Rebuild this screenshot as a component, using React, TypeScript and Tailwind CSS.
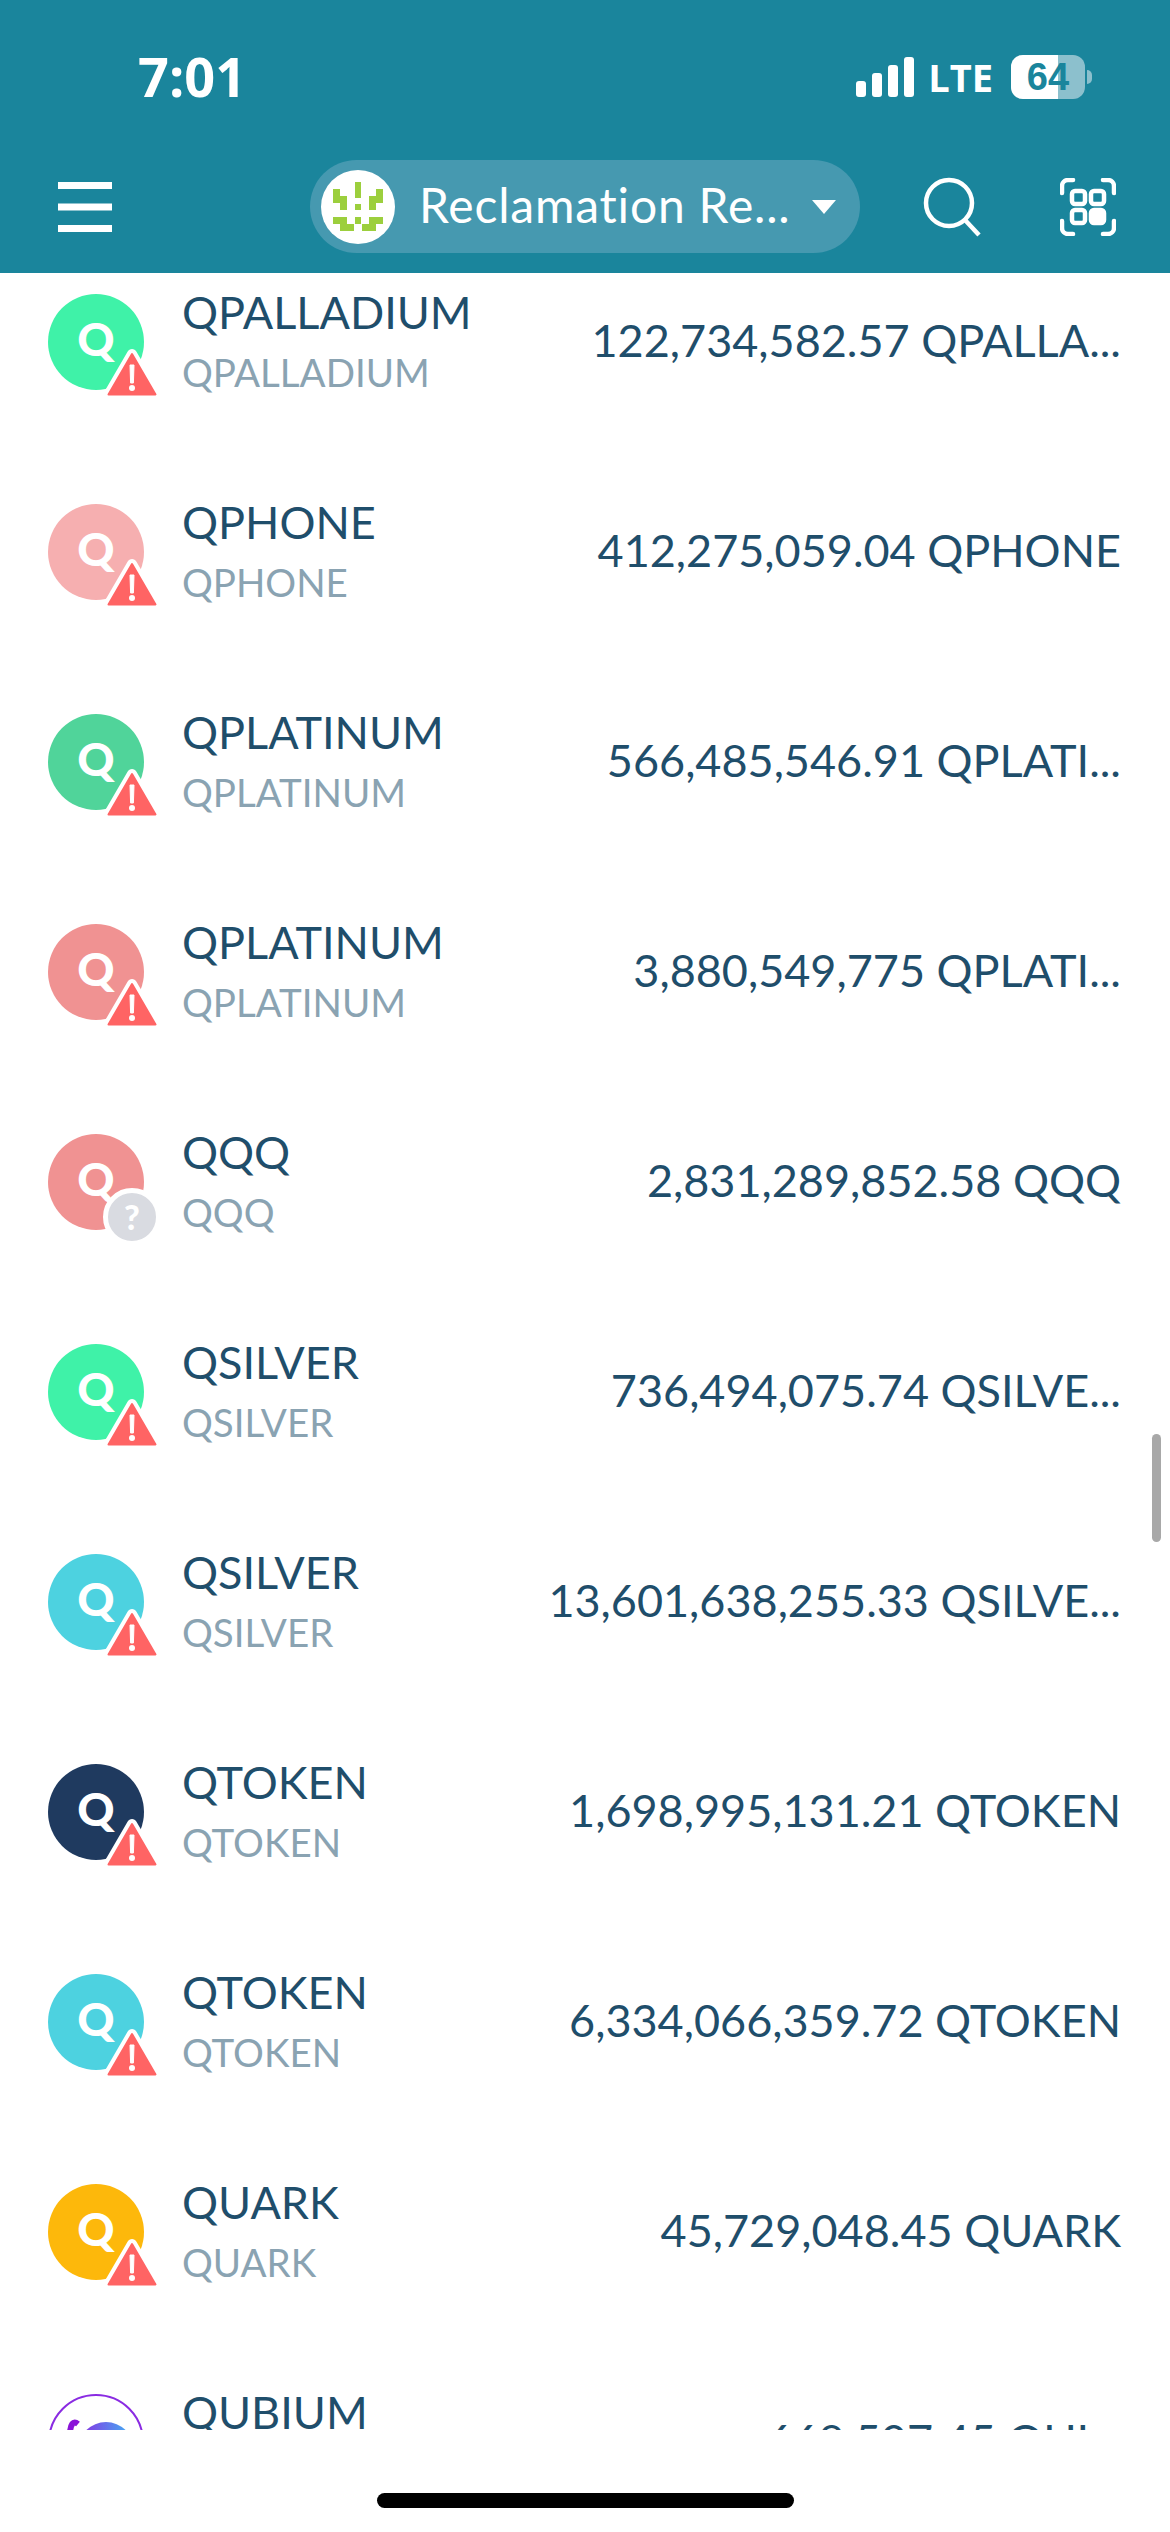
import React from "react";

const TOKENS = [
  { name: "QPALLADIUM", amount: "122,734,582.57 QPALLA...", color: "bg-[#3ff2a8]" },
  { name: "QPHONE", amount: "412,275,059.04 QPHONE", color: "bg-[#f6afb0]" },
  { name: "QPLATINUM", amount: "566,485,546.91 QPLATI...", color: "bg-[#50d49a]" },
  { name: "QPLATINUM", amount: "3,880,549,775 QPLATI...", color: "bg-[#f09292]" },
  { name: "QQQ", amount: "2,831,289,852.58 QQQ", color: "bg-[#f09292]", unknown: true },
  { name: "QSILVER", amount: "736,494,075.74 QSILVE...", color: "bg-[#3ff2a8]" },
  { name: "QSILVER", amount: "13,601,638,255.33 QSILVE...", color: "bg-[#4dd2e0]" },
  { name: "QTOKEN", amount: "1,698,995,131.21 QTOKEN", color: "bg-[#1f3a5f]" },
  { name: "QTOKEN", amount: "6,334,066,359.72 QTOKEN", color: "bg-[#4dd2e0]" },
  { name: "QUARK", amount: "45,729,048.45 QUARK", color: "bg-[#fdb80b]" },
];

const WarningBadge = () => (
  <svg className="absolute left-[54px] top-[52px]" width="60" height="56" viewBox="0 0 60 56">
    <path d="M30 8 L53.5 48.5 H6.5 Z" fill="#ff6464" stroke="#fff" strokeWidth="10" strokeLinejoin="round" />
    <path d="M30 8 L53.5 48.5 H6.5 Z" fill="#ff6464" stroke="#ff6464" strokeWidth="2" strokeLinejoin="round" />
    <path d="M28 19 h4 l-0.6 18 h-2.8 Z" fill="#fff" stroke="#fff" strokeWidth="1" strokeLinejoin="round" />
    <circle cx="30" cy="42" r="3" fill="#fff" />
  </svg>
);

const UnknownBadge = () => (
  <div className="absolute left-[55px] top-[54px] flex h-[58px] w-[58px] items-center justify-center rounded-full border-[5px] border-white bg-[#d9dbe1] text-[34px] font-black leading-none text-white">
    ?
  </div>
);

const Row = ({ name, amount, color, unknown }: any) => (
  <div className="flex h-[210px] items-center pl-[48px] pr-[49px]">
    <div className={`relative flex h-[96px] w-[96px] shrink-0 items-center justify-center rounded-full ${color}`}>
      <span className="-mt-[6px] text-[46px] font-black leading-none text-white">Q</span>
      {unknown ? <UnknownBadge /> : <WarningBadge />}
    </div>
    <div className="ml-[38px] flex flex-col">
      <span className="text-[45px] leading-[60px] text-[#1f4e6b]">{name}</span>
      <span className="text-[38.5px] leading-[60px] text-[#8aa3b2]">{name}</span>
    </div>
    <span className="-mt-[3px] ml-auto whitespace-nowrap text-[45px] text-[#1f4e6b]">{amount}</span>
  </div>
);

export default function App() {
  return (
    <div className="relative h-[2532px] w-[1170px] overflow-hidden bg-white font-['Lato',sans-serif]">
      {/* HEADER */}
      <div className="h-[273px] bg-[#1a859c]">
        <div className="flex h-[160px] items-start justify-between pl-[138px] pr-[78px] pt-[43px]">
          <span className="font-['Open_Sans',sans-serif] text-[54px] font-bold leading-[66px] text-white">7:01</span>
          <div className="flex items-center gap-[14px] pt-[12px]">
            <svg width="58" height="40" viewBox="0 0 58 40" fill="#fff">
              <rect x="0" y="24" width="10" height="16" rx="3" />
              <rect x="16" y="16" width="10" height="24" rx="3" />
              <rect x="32" y="8" width="10" height="32" rx="3" />
              <rect x="48" y="0" width="10" height="40" rx="3" />
            </svg>
            <span className="font-['Open_Sans',sans-serif] text-[38px] font-bold leading-none text-white">LTE</span>
            <div className="relative ml-[4px] flex h-[44px] w-[74px] items-center justify-center overflow-hidden rounded-[12px] bg-[#8cc0cd]">
              <div className="absolute inset-y-0 left-0 w-[47px] bg-white" />
              <span className="relative font-['Liberation_Sans',sans-serif] text-[38px] font-bold leading-none text-[#1a859c]">
                64
              </span>
            </div>
            <div className="-ml-[12px] h-[14px] w-[5px] rounded-r-full bg-[#8cc0cd]" />
          </div>
        </div>
        <div className="flex items-center pl-[58px]">
          <svg width="54" height="54" viewBox="0 0 54 54" fill="#fff">
            <rect x="0" y="2" width="54" height="7" />
            <rect x="0" y="23.5" width="54" height="7" />
            <rect x="0" y="45" width="54" height="7" />
          </svg>
          <div className="ml-[198px] flex h-[93px] w-[550px] items-center rounded-full bg-[#4699b0] pl-[11px]">
            <div className="flex h-[74px] w-[74px] items-center justify-center rounded-full bg-white">
              <svg width="50" height="50" viewBox="0 0 50 50" fill="#9ccf3d">
                <path d="M0 7 h7 v7 h7 v14 h-7 v-7 h-7 Z" />
                <path d="M50 7 h-7 v7 h-7 v14 h7 v-7 h7 Z" />
                <rect x="22" y="0" width="6" height="16" />
                <rect x="22" y="22" width="6" height="6" />
                <path d="M0 35 h14 v7 h8 v-7 h6 v7 h8 v-7 h14 v7 h-7 v7 h-14 v-7 h-8 v7 h-14 v-7 h-7 Z" />
              </svg>
            </div>
            <span className="-mt-[4px] ml-[24px] whitespace-nowrap text-[48px] leading-none tracking-[0.8px] text-white">
              Reclamation Re...
            </span>
            <svg className="ml-auto mr-[24px]" width="24" height="14" viewBox="0 0 24 14" fill="#fff">
              <path d="M0 0 H24 L12 14 Z" />
            </svg>
          </div>
          <svg className="ml-[63px]" width="58" height="60" viewBox="0 0 58 60" fill="none" stroke="#fff" strokeWidth="4.5">
            <circle cx="26" cy="26" r="23" />
            <path d="M42 43 L56 58" />
          </svg>
          <svg className="ml-[79px]" width="56" height="58" viewBox="0 0 56 58" fill="none" stroke="#fff" strokeWidth="4.5">
            <path d="M2 15 V8 a6 6 0 0 1 6 -6 H13" strokeLinecap="round" />
            <path d="M43 2 H48 a6 6 0 0 1 6 6 V15" strokeLinecap="round" />
            <path d="M2 43 V50 a6 6 0 0 0 6 6 H13" strokeLinecap="round" />
            <path d="M43 56 H48 a6 6 0 0 0 6 -6 V43" strokeLinecap="round" />
            <rect x="12" y="13" width="13" height="13" rx="3" />
            <rect x="31" y="13" width="13" height="13" rx="3" />
            <rect x="12" y="32" width="13" height="13" rx="3" />
            <rect x="31" y="32" width="13" height="13" rx="3" fill="#fff" />
          </svg>
        </div>
      </div>

      {/* TOKEN LIST */}
      <div className="h-[2157px] overflow-hidden">
        <div className="-mt-[36px]">
          {TOKENS.map((token, idx) => (
            <Row key={`token-${idx}`} {...token} />
          ))}
          <div className="flex h-[210px] items-center pl-[48px] pr-[49px]">
            <svg className="shrink-0" width="96" height="96" viewBox="0 0 96 96" fill="none">
              <defs>
                <linearGradient id="qubium" x1="0" y1="0" x2="1" y2="0">
                  <stop offset="0" stopColor="#8a2be2" />
                  <stop offset="1" stopColor="#3fb8f5" />
                </linearGradient>
              </defs>
              <circle cx="48" cy="48" r="47" stroke="#8a2be2" strokeWidth="2" />
              <path d="M30 30 C 20 22, 20 50, 26 62" stroke="#8a14d8" strokeWidth="6" />
              <circle cx="58" cy="56" r="28" fill="url(#qubium)" />
            </svg>
            <div className="ml-[38px] flex flex-col">
              <span className="text-[45px] leading-[60px] text-[#1f4e6b]">QUBIUM</span>
              <span className="text-[38.5px] leading-[60px] text-[#8aa3b2]">QUBIUM</span>
            </div>
            <span className="-mt-[3px] ml-auto whitespace-nowrap text-[45px] text-[#1f4e6b]">668,507.45 QUI...</span>
          </div>
        </div>
      </div>

      {/* SCROLLBAR */}
      <div className="absolute left-[1152px] top-[1434px] h-[108px] w-[9px] rounded-full bg-[#a8a8a8]" />

      {/* HOME BAR */}
      <div className="absolute bottom-[24px] left-[377px] h-[15px] w-[417px] rounded-full bg-black" />
    </div>
  );
}
